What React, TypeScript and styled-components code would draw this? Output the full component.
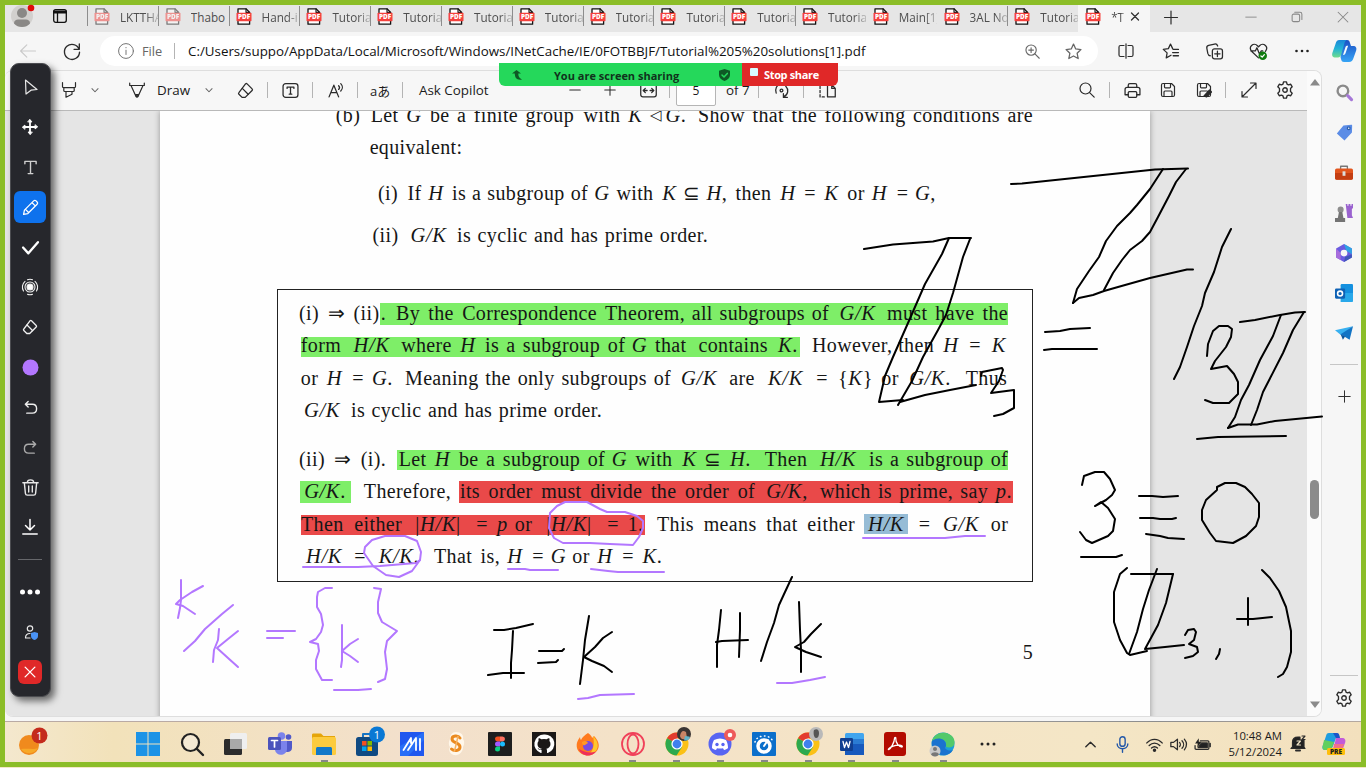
import React from "react";
import styled, { createGlobalStyle, css } from "styled-components";

const GlobalStyle = createGlobalStyle`
  * { box-sizing: border-box; }
  body { margin: 0; background: #f3e6c8; overflow: hidden; }
`;

const ui = `"Open Sans", "Noto Sans", sans-serif`;

/* ---------- shell ---------- */
const Root = styled.div`
  position: relative;
  width: 1366px;
  height: 768px;
  overflow: hidden;
  font-family: ${ui};
  color: #1b1b1b;
`;
const SharedScreen = styled.div`
  width: 1366px;
  height: 767px;
  border: 5px solid #8bbd28;
  display: flex;
  flex-direction: column;
  background: #f6f6f6;
`;
const Svg = styled.svg`
  display: block;
  flex: none;
  overflow: visible;
  fill: none;
  stroke-linecap: round;
  stroke-linejoin: round;
`;
const Slot = styled.div<{ $w: number; $ml?: number }>`
  flex: none;
  width: ${(p) => p.$w}px;
  margin-left: ${(p) => p.$ml ?? 0}px;
  display: flex;
  align-items: center;
  justify-content: center;
`;

type IconProps = { size?: number; color?: string; sw?: number; vb?: number; children: React.ReactNode };
const Icon = ({ size = 16, color = "#2b2b2b", sw = 1.2, vb = 16, children }: IconProps) => (
  <Svg width={size} height={size} viewBox={`0 0 ${vb} ${vb}`} stroke={color} strokeWidth={sw}>
    {children}
  </Svg>
);

/* ---------- tab strip ---------- */
const TabStrip = styled.div`
  flex: none;
  height: 27px;
  display: flex;
  background: #e6e6e6;
`;
const Avatar = styled.div`
  margin-left: 6px;
  width: 23px;
`;
const Tab = styled.div<{ $sep?: boolean; $active?: boolean; $dim?: boolean }>`
  flex: none;
  width: ${(p) => (p.$active ? 72 : 70.8)}px;
  height: 27px;
  display: flex;
  align-items: flex-start;
  padding: 3px 0 0 6px;
  border-left: 1px solid transparent;
  background: ${(p) => (p.$active ? "#f6f6f6" : "transparent")};
  svg { opacity: ${(p) => (p.$dim ? 0.5 : 1)}; }
  ${(p) =>
    p.$sep &&
    css`
      background: linear-gradient(#8d8d8d, #8d8d8d) 0 1px / 1px 20px no-repeat;
      background-origin: border-box;
    `}
`;
const TabTitle = styled.span<{ $w: number; $solid?: boolean }>`
  width: ${(p) => p.$w}px;
  margin-left: 10px;
  overflow: hidden;
  white-space: nowrap;
  font-size: 11.7px;
  line-height: 18px;
  color: #4e4e4e;
  mask-image: ${(p) => (p.$solid ? "none" : "linear-gradient(90deg, #000 68%, rgba(0, 0, 0, 0.25))")};
`;
const Push = styled.div`
  flex: 1;
`;

const PdfIcon = () => (
  <Svg width={16} height={17} viewBox="0 0 16 17">
    <path d="M2 .8h8l3.6 3.6v11.8H2z" fill="#fff" stroke="#111" strokeWidth={1.3} />
    <path d="M10 .8v3.6h3.6" stroke="#111" strokeWidth={1.1} />
    <rect x=".5" y="4.8" width="15" height="8.4" rx=".8" fill="#f5413d" />
    <text x="8" y="11.3" textAnchor="middle" fontSize="6.4" fontWeight="800" fill="#fff" fontFamily="Open Sans">
      PDF
    </text>
  </Svg>
);

const tabs = [
  { t: "LKTTHA", dim: true, sep: true },
  { t: "Thabo", dim: true, sep: true, solid: true },
  { t: "Hand-i", sep: true },
  ...Array.from({ length: 8 }, () => ({ t: "Tutoria", sep: true })),
  { t: "Main[1]", sep: false },
  { t: "3AL No", sep: false },
  { t: "Tutoria", sep: true },
] as { t: string; dim?: boolean; sep: boolean; solid?: boolean }[];

/* ---------- address bar ---------- */
const AddressRow = styled.div`
  flex: none;
  height: 38px;
  display: flex;
  align-items: center;
  background: #f6f6f6;
`;
const AddressPill = styled.div`
  width: 998px;
  height: 30px;
  margin-left: 19px;
  border-radius: 15px;
  background: #fff;
  display: flex;
  align-items: center;
`;
const FileLabel = styled.span`
  margin-left: 8px;
  width: 32px;
  font-size: 12.8px;
  color: #666;
`;
const Url = styled.span`
  margin-left: 13px;
  width: 690px;
  white-space: nowrap;
  font-size: 13.35px;
  color: #111;
`;
const Rule = styled.div<{ $ml?: number }>`
  flex: none;
  width: 1px;
  height: 16px;
  margin-left: ${(p) => p.$ml ?? 0}px;
  background: #b4b4b4;
`;

/* ---------- body ---------- */
const Body = styled.div`
  flex: none;
  height: 647px;
  display: flex;
  background: #f6f6f6;
`;
const Viewer = styled.div`
  width: 1317px;
  height: 647px;
  border: 1px solid #dedede;
  border-left: 0;
  border-radius: 8px;
  overflow: hidden;
  display: flex;
`;
const ViewerMain = styled.div`
  flex: none;
  width: 1302px;
  display: flex;
  flex-direction: column;
`;
const PdfBar = styled.div`
  flex: none;
  height: 40px;
  display: flex;
  align-items: center;
  padding-bottom: 1px;
  background: #f7f7f7;
  border-bottom: 1px solid #b9b9b9;
  font-size: 13.4px;
`;
const BarText = styled.span<{ $w: number; $ml: number }>`
  flex: none;
  width: ${(p) => p.$w}px;
  margin-left: ${(p) => p.$ml}px;
  white-space: nowrap;
`;
const Kana = styled(BarText)`
  font-family: "Open Sans", "Noto Sans CJK JP", sans-serif;
  font-size: 13px;
`;
const PageInput = styled.div`
  flex: none;
  width: 40px;
  height: 32px;
  margin-left: 6px;
  display: flex;
  align-items: center;
  justify-content: center;
  background: #fff;
  border: 1px solid #b5b5b5;
  border-radius: 2px;
  font-size: 12px;
`;
const Canvas = styled.div`
  flex: 1;
  overflow: hidden;
  background: #e5e5e5;
  padding: 0 0 0 155px;
`;
const Page = styled.div`
  width: 990px;
  height: 620px;
  background: #fefefe;
  display: flex;
  flex-direction: column;
  align-items: flex-start;
  box-shadow: 0 0 6px rgba(0, 0, 0, 0.35);
`;
const Scroll = styled.div`
  flex: 1;
  background: #fbfbfb;
  display: flex;
  flex-direction: column;
  align-items: center;
  padding: 8px 0 8px 1px;
`;
const Thumb = styled.div`
  width: 9px;
  height: 39px;
  margin-top: 394px;
  border-radius: 5px;
  background: #8b8b8b;
`;
const SideBar = styled.div`
  flex: 1;
  display: flex;
  flex-direction: column;
  align-items: center;
  padding: 11px 0 0 5px;
`;
const SideSlot = styled.div<{ $h?: number }>`
  flex: none;
  height: ${(p) => p.$h ?? 40}px;
  display: flex;
  align-items: center;
`;
const SideRule = styled.div<{ $mt?: number }>`
  flex: none;
  width: 28px;
  height: 1px;
  margin-top: ${(p) => p.$mt ?? 0}px;
  background: #c6c6c6;
`;

/* ---------- document text ---------- */
const Line = styled.div<{ $mt: number }>`
  flex: none;
  height: 22px;
  margin-top: ${(p) => p.$mt}px;
  display: flex;
  font: 20px/24px "Liberation Serif", serif;
  letter-spacing: 0.35px;
  white-space: nowrap;
  color: #161616;
`;
const Seg = styled.span<{ $w: number; $gap: number; $math?: boolean; $wide?: boolean; $small?: boolean }>`
  flex: none;
  width: ${(p) => p.$w}px;
  margin-left: ${(p) => p.$gap}px;
  text-align-last: ${(p) => (p.$wide ? "justify" : "center")};
  display: ${(p) => (p.$wide ? "block" : "flex")};
  justify-content: center;
  font-style: ${(p) => (p.$math ? "italic" : "normal")};
  ${(p) => p.$math && "font-size: 20.5px; letter-spacing: 0.6px;"}
  ${(p) => p.$small && "font-size: 15px;"}
`;
const Mark = styled.span<{ $w: number; $gap: number; $c: string; $y: number; $h: number }>`
  flex: none;
  display: flex;
  width: ${(p) => p.$w}px;
  height: 26px;
  margin-left: ${(p) => p.$gap}px;
  background: ${(p) => `linear-gradient(${p.$c}, ${p.$c}) 0 ${p.$y}px / 100% ${p.$h}px no-repeat`};
`;
const Up = styled.span`
  font-style: normal;
`;
const ProofBox = styled.div`
  flex: none;
  width: 756px;
  height: 293px;
  margin: 44px 0 0 117px;
  border: 1px solid #222;
  display: flex;
  flex-direction: column;
`;

type Run = [string, number, number];
type Marked = { c: string; from: number; to: number; y?: number; h?: number; runs: Run[] };
type Part = Run | Marked;

const upright = /([/|{}.,])/;
const renderRuns = (runs: Part[], start: number): React.ReactNode[] => {
  let cursor = start;
  return runs.map((part, i) => {
    if (Array.isArray(part)) {
      const [text, from, to] = part;
      const gap = from - cursor;
      cursor = to;
      const math = /^[|{]?[GHKp]([/|},.].*)?$/.test(text);
      return (
        <Seg key={i} $w={to - from} $gap={gap} $math={math} $wide={text.includes(" ")} $small={text === "◁"}>
          {math ? text.split(upright).map((s, j) => (/[|{}.,]/.test(s) ? <Up key={j}>{s}</Up> : <i key={j}>{s}</i>)) : text}
        </Seg>
      );
    }
    const gap = part.from - cursor;
    cursor = part.to;
    return (
      <Mark key={i} $w={part.to - part.from} $gap={gap} $c={part.c} $y={part.y ?? 2} $h={part.h ?? 22}>
        {renderRuns(part.runs, part.from)}
      </Mark>
    );
  });
};
const TextLine = ({ mt, start, parts }: { mt: number; start: number; parts: Part[] }) => (
  <Line $mt={mt}>{renderRuns(parts, start)}</Line>
);

const GREEN = "#7eee68";
const RED = "#e94949";
const BLUE = "#96bcd6";

const intro: { mt: number; parts: Part[] }[] = [
  { mt: -8, parts: [["(b)", 336, 360], ["Let", 370, 399], ["G", 406, 422], ["be a finite group", 430, 574], ["with", 582, 622], ["K", 627, 644], ["◁", 650, 662], ["G.", 665, 687], ["Show that the following conditions are", 698, 1033]] },
  { mt: 10, parts: [["equivalent:", 370, 462]] },
  { mt: 24, parts: [["(i)", 378, 398], ["If", 407, 422], ["H", 428, 444], ["is a subgroup of", 452, 588], ["G", 594, 610], ["with", 616, 654], ["K", 661, 678], ["⊆", 684, 699], ["H,", 706, 728], ["then", 734, 773], ["H", 780, 796], ["=", 803, 817], ["K", 823, 840], ["or", 847, 865], ["H", 872, 887], ["=", 896, 909], ["G,", 915, 936]] },
  { mt: 20, parts: [["(ii)", 373, 398], ["G/K", 407, 450], ["is cyclic and has prime order.", 457, 708]] },
];
const proof: { mt: number; parts: Part[] }[] = [
  { mt: 11, parts: [["(i)", 299, 319], ["⇒", 327, 346], ["(ii)", 354, 379], { c: GREEN, from: 380, to: 1008, runs: [[".", 381, 386], ["By the Correspondence", 396, 597], ["Theorem, all subgroups of", 605, 829], ["G/K", 836, 879], ["must have the", 887, 1008]] }] },
  { mt: 10, parts: [{ c: GREEN, from: 301, to: 800, y: 4, h: 20, runs: [["form", 301, 341], ["H/K", 350, 393], ["where", 402, 451], ["H", 460, 476], ["is a subgroup", 485, 600], ["of", 608, 625], ["G", 632, 647], ["that contains", 655, 768], ["K.", 776, 800]] }, ["However, then", 812, 934], ["H", 943, 959], ["=", 968, 982], ["K", 991, 1007]] },
  { mt: 11, parts: [["or", 301, 318], ["H", 326, 343], ["=", 351, 365], ["G.", 372, 393], ["Meaning the only subgroups of", 405, 671], ["G/K", 678, 720], ["are", 728, 756], ["K/K", 763, 808], ["=", 815, 829], ["{K}", 837, 874], ["or", 881, 899], ["G/K.", 906, 954], ["Thus", 965, 1008]] },
  { mt: 10, parts: [["G/K", 301, 343], ["is cyclic and has prime order.", 351, 602]] },
  { mt: 27, parts: [["(ii)", 299, 325], ["⇒", 333, 352], ["(i).", 361, 386], { c: GREEN, from: 397, to: 1008, y: 3, h: 20, runs: [["Let", 398, 427], ["H", 434, 451], ["be a subgroup of", 459, 605], ["G", 612, 627], ["with", 635, 673], ["K", 681, 698], ["⊆", 706, 720], ["H.", 729, 752], ["Then", 764, 808], ["H/K", 816, 860], ["is a subgroup of", 869, 1008]] }] },
  { mt: 10, parts: [{ c: GREEN, from: 300, to: 351, runs: [["G/K.", 300, 350]] }, ["Therefore,", 364, 451], { c: RED, from: 459, to: 1013, runs: [["its order must divide the order of", 460, 755], ["G/K,", 763, 811], ["which is prime, say", 820, 988], ["p.", 995, 1013]] }] },
  { mt: 11, parts: [{ c: RED, from: 301, to: 645, y: 3, h: 20, runs: [["Then either", 301, 402], ["|H/K|", 410, 466], ["=", 475, 489], ["p", 497, 508], ["or", 515, 532], ["|H/K|", 541, 597], ["=", 606, 620], ["1.", 627, 644]] }, ["This means that either", 657, 855], { c: BLUE, from: 864, to: 908, y: 2, h: 20, runs: [["H/K", 864, 908]] }, ["=", 917, 932], ["G/K", 940, 982], ["or", 991, 1008]] },
  { mt: 10, parts: [["H/K", 302, 346], ["=", 353, 367], ["K/K.", 374, 424], ["That is,", 434, 500], ["H", 507, 523], ["=", 531, 545], ["G", 551, 566], ["or", 572, 590], ["H", 597, 613], ["=", 621, 635], ["K.", 641, 664]] },
];

/* ---------- freehand annotations ---------- */
const Ink = styled.svg`
  position: absolute;
  inset: 0;
  fill: none;
  stroke-linecap: round;
  stroke-linejoin: round;
  stroke-width: 2;
`;
const blackInk = [
  "864,249 893,244.5 933,241.5 949,238 971,238",
  "949,238 942,254 925,284 908,323 893,357 885,376 879,402 903,400",
  "970,239 963,257 953,293 946,315 938,330 923,357 912,381 898,405",
  "900,402 925,395 950,390 976,385",
  "981,376 982,372 1002,368 1003,370 999,381 991,393 1014,390 1014,408 1003,414 994,416",
  "1011,184 1022,183.5 1155,169.5 1188,168.5",
  "1163,169 1150,189 1137,205 1130,213 1117,226 1106,241 1099,257 1089,271 1077,289 1073,303",
  "1073,303 1079,298 1093,295 1104,291 1118,287 1150,278 1187,269.5 1193,269.5",
  "1186,169 1176,182 1169,196 1158,217 1150,232 1142,241 1130,250 1122,260 1113,273 1104,290",
  "1231,229 1222,247 1214,272 1205,293 1202,306 1194,326 1187,347 1180,367 1174,379",
  "1045,332 1060,331 1070,329 1090,328",
  "1044,350 1052,349 1097,349",
  "1207,356 1208,344 1213,331 1219,326 1228,326 1232,329 1231,337 1226,347 1215,361 1211,369 1227,366 1234,374 1238,382 1238,394 1229,403 1213,403 1205,400",
  "1240,322 1255,320 1280,315 1295,312.5 1305,312",
  "1281,315 1273,336 1260,360 1249,385 1241,400 1235,417 1228,428",
  "1304,312 1293,330 1283,353 1263,392 1257,410 1251,425",
  "1228,428 1238,424.5 1257,424.5 1275,421 1322,416.5",
  "1197,439 1218,437 1286,436",
  "1082,485 1084,476 1095,472 1104,472 1110,479 1115,490 1112,495 1106,500 1095,506 1101,502 1108,508 1115,519 1113,531 1108,536 1092,543 1086,540 1080,532",
  "1081,557 1116,557 1122,555",
  "1139,496 1152,496 1163,497 1178,496",
  "1140,518 1153,518 1160,519 1172,519 1176,518",
  "1146,534 1160,536 1168,538 1184,539",
  "1217,490 1217,487 1225,483 1236,483 1245,487 1252,494 1259,503 1259,517 1256,526 1246,536 1233,543 1216,541 1210,533 1202,520 1202,510 1206,500 1217,490",
  "1127,568 1120,574 1114,592 1114,622 1120,640 1127,653 1130,655 1147,651",
  "1131,574 1173,574",
  "1157,569 1149,590 1143,609 1137,632 1129,654",
  "1173,574 1166,603 1158,625 1145,649 1165,647 1184,645",
  "1185,635 1188,630 1194,629 1196,632 1194,640 1189,644 1197,647 1198,652 1193,656 1185,658",
  "1220,649 1219,654 1216,659",
  "1248,598 1248,625",
  "1237,619 1253,619 1272,617",
  "1262,570 1270,578 1279,591 1286,607 1291,631 1291,652 1287,667 1283,674 1278,677",
  "494,630 504,630 516,628 533,624",
  "513,631 512,650 511,663 511,678",
  "488,675 503,673 524,673",
  "539,651 562,651 564,649",
  "538,663 556,662 558,660",
  "589,616 585,640 583,660 580,684",
  "612,632 603,638 595,647 584,657 592,661 604,666 612,672",
  "721,610 719,630 717,645 717,667",
  "740,613 740,630 739,657",
  "716,642 722,641 748,640",
  "792,577 785,592 779,605 774,623 767,642 761,661",
  "799,602 800,630 801,650 801,672",
  "821,624 811,634 804,642 795,647 806,652 821,657",
];
const violetInk = [
  "181,580 181,600 180,608 178,618",
  "203,586 192,592 180,600 176,604 183,606 195,614",
  "233,605 222,614 205,629 195,641 184,651",
  "219,629 218,640 214,650 213,662",
  "238,631 228,639 217,648 228,658 238,667",
  "267,631 295,631",
  "267,638 283,638",
  "332,588 325,588 318,592 317,597 317,607 321,614 323,625 321,632 316,639 310,642 318,644 319,651 316,660 316,669 322,680 332,680",
  "342,625 342,645 342,660 341,667",
  "358,639 350,644 342,651 350,656 358,662",
  "374,588 381,589 378,602 378,613 382,622 397,631 387,641 385,652 387,669 385,679 378,682",
  "334,690 358,690 371,689",
  "578,699 588,698 600,695 634,694",
  "777,683 792,683 810,680 825,677",
  "303,567 358,567 380,566 416,563 420,560",
  "365,547 372,540 385,536 405,536 417,541 421,552 420,560 412,571 399,577 386,575 373,566 364,553 365,547",
  "508,569 525,569 530,570 558,570",
  "591,569 608,571 618,572 664,572",
  "550,513 557,506 565,502 587,502 600,509 607,512 625,512 637,516 643,521 643,528 639,537 633,545 610,544 590,543 563,543 554,538 549,528 550,513",
  "863,538 945,538 965,536 985,536",
];

/* ---------- screen share overlays ---------- */
const ShareBanner = styled.div`
  position: absolute;
  left: 499px;
  top: 63px;
  display: flex;
  height: 23px;
  font-size: 11px;
  font-weight: 700;
  line-height: 23px;
  border-radius: 0 0 6px 6px;
  overflow: hidden;
`;
const Sharing = styled.div`
  width: 243px;
  display: flex;
  align-items: center;
  background: #25d85b;
  color: #10331c;
  padding-left: 13px;
`;
const SharingText = styled.span`
  width: 126px;
  margin: 1px 39px 0 32px;
  white-space: nowrap;
`;
const StopShare = styled.div`
  width: 96px;
  display: flex;
  align-items: center;
  background: #e02828;
  color: #fff;
  padding: 0 0 1px 8px;
  white-space: nowrap;
  letter-spacing: -0.35px;
`;
const StopSquare = styled.span`
  width: 8px;
  height: 8px;
  margin: 0 6px 4px 0;
  border-radius: 1px;
  background: #d8fbff;
`;
const Tools = styled.div`
  position: absolute;
  left: 10px;
  top: 63px;
  width: 41px;
  height: 634px;
  border-radius: 9px;
  border: 1px solid #4b4c50;
  background: #26272c;
  box-shadow: 4px 4px 7px rgba(0, 0, 0, 0.55);
  display: flex;
  flex-direction: column;
  align-items: center;
  padding: 3px 1px 0 0;
`;
const ToolSlot = styled.div<{ $bg?: string; $s?: number }>`
  flex: none;
  width: ${(p) => p.$s ?? 32}px;
  height: ${(p) => p.$s ?? 32}px;
  margin: ${(p) => (40 - (p.$s ?? 32)) / 2}px 0;
  display: flex;
  align-items: center;
  justify-content: center;
  border-radius: 6px;
  background: ${(p) => p.$bg ?? "transparent"};
`;
const ToolRule = styled.div`
  flex: none;
  width: 24px;
  height: 1px;
  margin: 12px 0;
  background: #66676b;
`;

/* ---------- taskbar ---------- */
const TaskEdge = styled.div`
  flex: none;
  height: 5px;
  border-bottom: 1px solid;
  border-image: linear-gradient(90deg, #b9aaa4 50%, #a7a7a7 55%, #8d8d8d 85%, #b5a9a0) 1;
`;
const Taskbar = styled.div`
  flex: 1;
  display: flex;
  align-items: center;
  background: linear-gradient(90deg, #f4e8ce, #f2e2ba 8%, #f3e0cc 30%, #f4e2c8 45%, #f4e6c6 80%, #f3e0bd);
`;
const TaskItem = styled.div<{ $run?: boolean; $w?: number }>`
  flex: none;
  width: ${(p) => p.$w ?? 44.05}px;
  height: 40px;
  display: flex;
  align-items: center;
  justify-content: center;
  padding-top: 4px;
  background: ${(p) => (p.$run ? "linear-gradient(#888,#888) 50% 100% / 7px 2px no-repeat" : "none")};
`;
const Tray = styled.div`
  display: flex;
  align-items: center;
  padding-top: 4px;
`;
const Clock = styled.div`
  width: 66px;
  text-align: right;
  font-size: 11.3px;
  line-height: 16px;
  white-space: nowrap;
`;

const T = ({ children }: { children: React.ReactNode }) => (
  <Svg width={24} height={24} viewBox="0 0 24 24">
    {children}
  </Svg>
);
const Chrome = () => (
  <>
    <circle cx="12" cy="12" r="11.5" fill="#fbc116" />
    <path d="M12 12 2 6.2A11.5 11.5 0 0 1 22 6.2H12z" fill="#e33b2e" />
    <path d="M2 6.2A11.5 11.5 0 0 0 11.5 23.5L17 15 12 12z" fill="#2da94f" />
    <circle cx="12" cy="12" r="5.6" fill="#fff" />
    <circle cx="12" cy="12" r="4.4" fill="#3f80ee" />
  </>
);
const Copilot = () => (
  <>
    <defs>
      <linearGradient id="cpLeft" x1="0" y1="0" x2="0" y2="1">
        <stop offset="0" stopColor="#1a86d8" />
        <stop offset=".5" stopColor="#22b3d6" />
        <stop offset="1" stopColor="#6fdc8c" />
      </linearGradient>
      <linearGradient id="cpRight" x1="0" y1="0" x2="0" y2="1">
        <stop offset="0" stopColor="#1b4fc4" />
        <stop offset="1" stopColor="#36a4f5" />
      </linearGradient>
    </defs>
    <path d="M11 1h4c2 0 2.500 1 3 3l1 3h2c3 0 4 2 3 5l-2.500 7c-.8 2.500-2 4-4.500 4h-5c-2 0-2.500-1-3-3l-.5-2z" fill="url(#cpRight)" />
    <path d="M7.500 1H15c-1.500.5-2 1.500-2.500 3L9 16c-.5 1.500-1.500 2.500-3 2.500H3.500c-3 0-4-2-3-5L3.500 5C4.300 2.500 5 1 7.500 1z" fill="url(#cpLeft)" />
    <path d="m11 16 2.500-8c.3-.8.800-1.200 1.600-1.200h1L13.600 14c-.4 1.300-1 2-2.600 2z" fill="#f5fbff" />
  </>
);

const gear = (
  <>
    <path d="M6.700.8h2.600l.5 2 1.300.7 2-.6 1.300 2.300-1.500 1.400v2.800l1.500 1.400-1.300 2.300-2-.6-1.300.7-.5 2H6.700l-.5-2-1.300-.7-2 .6-1.300-2.300 1.500-1.400V6.600L1.600 5.200l1.300-2.300 2 .6 1.300-.7z" />
    <circle cx="8" cy="8" r="2" />
  </>
);
const chevron = <path d="m4.500 6.500 3.500 3.500 3.500-3.500" />;
const floppy = (
  <>
    <path d="M1.500 3c0-1 .5-1.500 1.500-1.500h8.500l3 3V13c0 1-.5 1.500-1.500 1.500H3c-1 0-1.500-.5-1.500-1.500z" />
    <path d="M4.500 1.500V5c0 .5.300.8.8.8h4.400c.5 0 .8-.3.800-.8V1.500M4 14.500V10c0-.6.300-1 1-1h6c.7 0 1 .4 1 1v4.500" />
  </>
);
const eraser = (
  <>
    <path d="m9.500 1.800 4.700 4.700c.5.500.5 1 0 1.500l-6.500 6.500H4.800L1.800 11.500c-.5-.5-.5-1 0-1.500L8 1.800c.5-.5 1-.5 1.500 0z" />
    <path d="m5 6 5.500 5.500" />
  </>
);

export default function App() {
  return (
    <Root>
      <GlobalStyle />
      <SharedScreen>
        <TabStrip>
          <Avatar>
            <Svg width={30} height={27} viewBox="0 0 30 27">
              <circle cx="11" cy="11" r="11" fill="#d2d0ce" />
              <circle cx="11" cy="8" r="5" fill="#8a8886" />
              <path d="M3 18.500c0-3 2-4 4-4h8c2 0 4 1 4 4-2 2.500-5 3.500-8 3.500s-6-1-8-3.500z" fill="#8a8886" />
              <circle cx="20" cy="3" r="3.300" fill="#e00b0b" />
            </Svg>
          </Avatar>
          <Slot $w={14} $ml={19}>
            <Svg width={14} height={27} viewBox="0 0 14 27" stroke="#111" strokeWidth={1.3}>
              <rect x=".7" y="4.700" width="12.600" height="12.600" rx="2" />
              <path d="M1 6.500h12M1 7.500h12" strokeWidth={2} />
              <path d="M4.500 8v9" />
            </Svg>
          </Slot>
          <Slot $w={20} />
          {tabs.map((t, i) => (
            <Tab key={i} $sep={t.sep} $dim={t.dim}>
              <PdfIcon />
              <TabTitle $w={38} $solid={t.solid}>{t.t}</TabTitle>
            </Tab>
          ))}
          <Tab $active>
            <PdfIcon />
            <TabTitle $w={14}>*T</TabTitle>
            <Slot $w={10} $ml={5}>
              <Svg width={10} height={17} viewBox="0 0 10 17" stroke="#333" strokeWidth={1.300}>
                <path d="m1.500 5 7 7m0-7-7 7" />
              </Svg>
            </Slot>
          </Tab>
          <Slot $w={16} $ml={13}>
            <Icon sw={1.200}><path d="M8 0v13M1.500 6.500h13" /></Icon>
          </Slot>
          <Push />
          <Slot $w={16}><Icon size={12} color="#888" sw={1.200}><path d="M1 5.500h14" /></Icon></Slot>
          <Slot $w={16} $ml={30}>
            <Icon size={12} color="#888" sw={1.400}><rect x="1.500" y="1.500" width="10" height="10" rx="2" /><path d="M5-1h7c1.500 0 2.500 1 2.500 2.500v7" /></Icon>
          </Slot>
          <Slot $w={16} $ml={30}><Icon size={12} color="#888" sw={1.400}><path d="m1.500-1 13 13m0-13-13 13" /></Icon></Slot>
          <Slot $w={10} />
        </TabStrip>

        <AddressRow>
          <Slot $w={18} $ml={14}><Icon color="#c9c9c9" sw={1.100}><path d="M15.500 8H.8m6-6.200L.6 8l6.200 6.200" /></Icon></Slot>
          <Slot $w={18} $ml={26}><Icon size={18} sw={1.200}><path d="M14.300 6.500A6.700 6.700 0 1 0 14.700 9M14.500 1.800v4.700H9.800" /></Icon></Slot>
          <AddressPill>
            <Slot $w={16} $ml={18}><Icon color="#757575" sw={1}><circle cx="8" cy="8" r="7.400" /><path d="M8 7.200v4.300M8 4.500v.3" /></Icon></Slot>
            <FileLabel>File</FileLabel>
            <Rule />
            <Url>C:/Users/suppo/AppData/Local/Microsoft/Windows/INetCache/IE/0FOTBBJF/Tutorial%205%20solutions[1].pdf</Url>
            <Push />
            <Slot $w={16}><Icon size={15} color="#666"><circle cx="6.500" cy="6.500" r="5.500" /><path d="m10.600 10.600 4.600 4.600M4 6.500h5M6.500 4v5" /></Icon></Slot>
            <Slot $w={18} $ml={24}><Icon size={17} color="#666"><path d="m8 1 2.100 4.600 4.900.6-3.600 3.400 1 5L8 12.200l-4.400 2.400 1-5L1 6.200l4.900-.6z" /></Icon></Slot>
            <Slot $w={16} />
          </AddressPill>
          <Slot $w={18} $ml={19}><Icon><path d="M6 2.500H2.500c-1 0-1.500.5-1.500 1.500v8c0 1 .5 1.500 1.500 1.500H6M10 2.500h3.500c1 0 1.500.5 1.500 1.500v8c0 1-.5 1.500-1.500 1.500H10M8 .8v14.400" /></Icon></Slot>
          <Slot $w={18} $ml={26}><Icon size={17}><path d="M8.500 11.500 4 14l.8-4.700L1.200 6l4.800-.7L8 1l2 4.300M10.500 6h5M10 9h5.500M10.500 12h5" /></Icon></Slot>
          <Slot $w={18} $ml={26}><Icon size={17}><rect x="6" y="5.500" width="9.500" height="9.500" rx="2" /><path d="M10.750 7.700v5M8.200 10.200h5M4 12C2.500 12 2 11 1.700 9.800L.8 5C.5 3.500 1 2.500 2.500 2.200L8 1c1.400-.3 2.500.3 3 1.800" /></Icon></Slot>
          <Slot $w={18} $ml={26}>
            <Icon size={17}><path d="M8 14 1.700 8C0 6 0 3.800 1.500 2.400 3 1 5.500 1 7 2.600L8 3.700l1-1.100C10.500 1 13 1 14.500 2.400 16 3.800 16 6 14.500 7.800M.8 7.500H5l1.500-3 2.500 6 1.500-3H12" /><circle cx="12" cy="12" r="4" fill="#107c10" stroke="none" /><path d="m10.300 12.200 1.200 1.100 2-2.300" stroke="#fff" /></Icon>
          </Slot>
          <Slot $w={18} $ml={26}><Icon><g fill="#222" stroke="none"><circle cx="2.500" cy="8" r="1.300" /><circle cx="8" cy="8" r="1.300" /><circle cx="13.500" cy="8" r="1.300" /></g></Icon></Slot>
          <Slot $w={24} $ml={21}><T><Copilot /></T></Slot>
        </AddressRow>

        <Body>
          <Viewer>
            <ViewerMain>
              <PdfBar>
                <Slot $w={16} $ml={56}><Icon><path d="M1.500.5v4c0 .8.400 1.200 1.200 1.200h10.600c.8 0 1.200-.4 1.200-1.200v-4M2.800 6v2.500c0 .6.300 1 1 1h8.400c.7 0 1-.4 1-1V6M5 9.500v5.700l6-3V9.500" /></Icon></Slot>
                <Slot $w={12} $ml={12}><Icon size={14} color="#666">{chevron}</Icon></Slot>
                <Slot $w={16} $ml={28}><Icon><path d="M.7 1v2.500M15.300 1v2.500M.7 3.500h14.600M2 3.500l5 11c.4.800 1.600.8 2 0l5-11" /><path d="m6.500 12.500 1 2h1l1-2z" fill="#444" /></Icon></Slot>
                <BarText $w={34} $ml={12}>Draw</BarText>
                <Slot $w={12} $ml={12}><Icon size={14} color="#666">{chevron}</Icon></Slot>
                <Slot $w={18} $ml={21}><Icon size={17}>{eraser}</Icon></Slot>
                <Rule $ml={13} />
                <Slot $w={16} $ml={14}><Icon size={17}><rect x="1" y="1.500" width="14" height="13" rx="2.500" /><path d="M4.800 6V4.800h6.400V6M8 4.800v6.700M6.800 11.500h2.400" /></Icon></Slot>
                <Rule $ml={14} />
                <Slot $w={16} $ml={15}><Icon size={17}><path d="m1 14 4.500-11L10 14M2.700 10h5.600M10 3.500c1 1 1 2.500 0 3.500M12 1.500c2 2 2 5 0 7" /></Icon></Slot>
                <Rule $ml={13} />
                <Kana $w={20} $ml={12}>aあ</Kana>
                <Rule $ml={12} />
                <BarText $w={74} $ml={16}>Ask Copilot</BarText>
                <Slot $w={14} $ml={75}><Icon size={14}><path d="M2 8h12" /></Icon></Slot>
                <Slot $w={14} $ml={21}><Icon size={14}><path d="M2 8h12M8 2v12" /></Icon></Slot>
                <Slot $w={18} $ml={22}><Icon size={17}><rect x=".7" y="2" width="14.600" height="12" rx="2" /><path d="M3.500 8h3.200M9.500 8h3M5 6 3 8l2 2M11 6l2 2-2 2" /></Icon></Slot>
                <Rule $ml={12} />
                <PageInput>5</PageInput>
                <BarText $w={22} $ml={10}>of 7</BarText>
                <Rule $ml={10} />
                <Slot $w={18} $ml={13}><Icon size={17}><circle cx="8" cy="8" r="1.300" /><path d="M3 10.500C1.500 6 4 3 6 2.500M12 4c3 3 2.500 8-2 10M13.500 14.500H9.800V11" /></Icon></Slot>
                <Rule $ml={13} />
                <Slot $w={18} $ml={14}><Icon size={17}><path d="M8 2.500h4l3.300 3.500v8H8zM12 3v3h3" /><path d="M5 14H1V2.500h4" strokeDasharray="2 2" /></Icon></Slot>
                <Push />
                <Slot $w={16}><Icon><circle cx="6.500" cy="6.500" r="5.500" /><path d="m10.600 10.600 4.600 4.600" /></Icon></Slot>
                <Rule $ml={14} />
                <Slot $w={18} $ml={13}><Icon size={17}><path d="M4 5V3c0-1 .5-1.500 1.500-1.500h5c1 0 1.500.5 1.500 1.500v2M4 12H1V7c0-1.300.7-2 2-2h10c1.300 0 2 .7 2 2v5h-3" /><rect x="4" y="9" width="8" height="5.500" rx="1" /></Icon></Slot>
                <Slot $w={18} $ml={18}><Icon>{floppy}</Icon></Slot>
                <Slot $w={18} $ml={18}><Icon>{floppy}<path d="m8 14 5.500-6 2 2-5 5z" fill="#2b2b2b" /></Icon></Slot>
                <Rule $ml={12} />
                <Slot $w={18} $ml={14}><Icon><path d="M1.500 14.500l13-13M9.500 1h5.500v5.500M1 9.500V15h5.500" /></Icon></Slot>
                <Slot $w={18} $ml={18}><Icon size={18}>{gear}</Icon></Slot>
                <Slot $w={13} />
              </PdfBar>
              <Canvas>
                <Page>
                  {intro.map((l, i) => <TextLine key={i} mt={l.mt} start={160} parts={l.parts} />)}
                  <ProofBox>
                    {proof.map((l, i) => <TextLine key={i} mt={l.mt} start={278} parts={l.parts} />)}
                  </ProofBox>
                  <TextLine mt={58} start={160} parts={[["5", 1022, 1034]]} />
                </Page>
              </Canvas>
            </ViewerMain>
            <Scroll>
              <Svg width={10} height={7} viewBox="0 0 10 7"><path d="M5 0 10 6.500H0z" fill="#8b8b8b" /></Svg>
              <Thumb />
              <Push />
              <Svg width={10} height={7} viewBox="0 0 10 7"><path d="M5 7 10 .5H0z" fill="#8b8b8b" /></Svg>
            </Scroll>
          </Viewer>
          <SideBar>
            <SideSlot $h={22}><Icon size={17}><circle cx="6.500" cy="6.500" r="5" stroke="#8a8a8a" strokeWidth={2.200} /><path d="m11 11 3.600 3.600" stroke="#a678d8" strokeWidth={3} /></Icon></SideSlot>
            <SideSlot $h={58}><Icon size={17}><path d="M7 1.500 14.500.8c.5 0 .8.300.7.800L15 8l-7 7.500L.8 9z" fill="#5b8ce6" stroke="none" /><circle cx="12" cy="4" r="1.300" fill="#fff" stroke="#2b5fb0" /></Icon></SideSlot>
            <SideSlot $h={24}><Icon size={18}><path d="M5 4V2h6v2" stroke="#777" /><rect x="0" y="4" width="16" height="10" rx="1.500" fill="#e2551d" stroke="none" /><path d="M0 8h16v4.500c0 1-.5 1.500-1.500 1.500h-13C.5 14 0 13.500 0 12.500z" fill="#c43e12" stroke="none" /><rect x="6.700" y="6.500" width="2.600" height="4" fill="#ddd" stroke="none" /></Icon></SideSlot>
            <SideSlot $h={56}><Icon size={18}><g stroke="none"><path d="M9.500 0h1.500v1.500h1V0h1.700v1.500h1V0H16v3.500l-1 1V10l1 2.500h-5z" fill="#9a62cf" /><circle cx="5" cy="5" r="2.700" fill="#8d8d8d" /><path d="M3.500 7h3l1 5.500H9V16H0v-3.500h2.500z" fill="#747474" /></g></Icon></SideSlot>
            <SideSlot $h={24}><Icon size={18}><g stroke="none"><path d="M8 0 15 4v8l-7 4-7-4V4z" fill="#6a5be0" /><path d="m8 0 7 4v5l-5-3z" fill="#2ea3e3" /><path d="M1 4v8l4 2.300V8z" fill="#a86ddc" /><path d="m8 16 7-4V9l-6 2.500z" fill="#3e56b8" /><circle cx="8" cy="8" r="3" fill="#f6f6f6" /></g></Icon></SideSlot>
            <SideSlot $h={56}><Icon size={18}><g stroke="none"><rect x="5" y="0" width="11" height="10" rx="1" fill="#1490df" /><path d="M5 8h11v7c0 .6-.4 1-1 1H5z" fill="#28a8ea" /><rect x="0" y="4" width="9" height="9" rx="1" fill="#0f62b5" /></g><circle cx="4.500" cy="8.500" r="2.200" stroke="#fff" strokeWidth={1.400} /></Icon></SideSlot>
            <SideSlot $h={24}><Icon size={18}><g stroke="none"><path d="M0 5.500 16 2 5.500 10z" fill="#38b0f0" /><path d="m5 9 11-7-3 12z" fill="#1173c4" /><path d="m5 9 2 5 2-3z" fill="#0c559a" /></g></Icon></SideSlot>
            <SideRule $mt={19} />
            <SideSlot $h={63}><Icon size={13}><path d="M8 1v14M1 8h14" /></Icon></SideSlot>
            <SideRule $mt={247} />
            <SideSlot $h={44}><Icon size={18}>{gear}</Icon></SideSlot>
          </SideBar>
        </Body>

        <TaskEdge />
        <Taskbar>
          <TaskItem $w={54}>
            <Svg width={30} height={30} viewBox="0 0 30 30"><circle cx="12" cy="16" r="10" fill="#f08a1d" /><path d="M4 20a10 10 0 0 0 17-1c-5 2-9 0-17 1z" fill="#f7a928" /><circle cx="22.500" cy="6.500" r="8" fill="#c42b1c" /><text x="22.500" y="10.500" textAnchor="middle" fontSize="11" fill="#fff" fontFamily="Open Sans">1</text></Svg>
          </TaskItem>
          <Slot $w={67} />
          <TaskItem><T><path d="M0 0h11.500v11.500H0zM12.500 0H24v11.500H12.500zM0 12.500h11.500V24H0zM12.500 12.500H24V24H12.500z" fill="#1c93e6" /></T></TaskItem>
          <TaskItem><T><circle cx="10.500" cy="10.500" r="8.500" stroke="#222" strokeWidth={2.200} fill="#f5ead4" /><path d="m17 17 6 6" stroke="#222" strokeWidth={2.400} /></T></TaskItem>
          <TaskItem><T><rect x="6" y="1" width="17" height="16" rx="1.500" fill="#efefef" /><rect x="0" y="7" width="18" height="16" rx="1.500" fill="#2c2c2c" /><path d="M6 7h12v10H6z" fill="#a9a9a9" /></T></TaskItem>
          <TaskItem><T><circle cx="20.500" cy="5" r="2.800" fill="#5059c9" /><circle cx="13.500" cy="4" r="3.800" fill="#7b83eb" /><path d="M16 9h8v7c0 4-5 5-8 3z" fill="#5059c9" /><path d="M7 9h12v8c0 7-11 8-12 1z" fill="#7b83eb" /><rect x="0" y="5" width="13" height="13" rx="1.500" fill="#4b53bc" /><path d="M3.500 8.500h6M6.500 8.500V15" stroke="#fff" strokeWidth={1.700} /></T></TaskItem>
          <TaskItem $run><T><path d="M0 3c0-1 .5-1.500 1.500-1.500H9L11.500 4H23v6H0z" fill="#e5a50a" /><rect x="0" y="5" width="24" height="18" rx="1.500" fill="#fccb3e" /><path d="M4 17c0-1.500.5-2 2-2h12c1.500 0 2 .5 2 2v6H4z" fill="#1278c8" /></T></TaskItem>
          <TaskItem><T><path d="M7 5V2h8v3" stroke="#1674c4" strokeWidth={2} /><rect x="0" y="5" width="22" height="19" rx="2.500" fill="#104a82" /><path d="M6 9h4.500v4.500H6z" fill="#f25022" /><path d="M11.500 9H16v4.500h-4.500z" fill="#7fba00" /><path d="M6 14.500h4.500V19H6z" fill="#00a4ef" /><path d="M11.500 14.500H16V19h-4.500z" fill="#ffb900" /><circle cx="21" cy="2.500" r="8" fill="#0a78d4" /><text x="21" y="6.500" textAnchor="middle" fontSize="11" fill="#fff" fontFamily="Open Sans">1</text></T></TaskItem>
          <TaskItem><T><rect width="24" height="24" fill="#2057ef" /><path d="M0 14 24 0v8L8 24H0z" fill="#2f86ff" opacity=".5" /><path d="M3.500 18 11 6v5M8 18l8-12v12M20 7v11" stroke="#fff" strokeWidth={1.800} /></T></TaskItem>
          <TaskItem><T><path d="M12 0c5 0 8 3 7 7 2 3 1 6 0 8 0 5-4 9-9 8-4-1-6-5-4-8-2-3-1-6 0-8 0-4 2-7 6-7z" fill="#fff7ea" /><path d="M16 6c-2-3-8-2.500-8 1C8 11.500 16 10 16 15c0 4-6 4.500-8.500 2" stroke="#eb8a1f" strokeWidth={3} /><path d="M14 4.500 10.500 19" stroke="#f6b262" strokeWidth={1.500} /></T></TaskItem>
          <TaskItem><T><rect width="24" height="24" rx="1" fill="#1e1e1e" /><path d="M12 4.500H9.500a2.500 2.500 0 0 0 0 5H12z" fill="#f24e1e" /><path d="M12 4.500h2.500a2.500 2.500 0 0 1 0 5H12z" fill="#ff7262" /><path d="M12 9.500H9.500a2.500 2.500 0 0 0 0 5H12z" fill="#a259ff" /><circle cx="14.500" cy="12" r="2.500" fill="#1abcfe" /><path d="M12 14.500H9.500A2.500 2.500 0 1 0 12 17z" fill="#0acf83" /></T></TaskItem>
          <TaskItem><T><rect width="24" height="24" fill="#1b1817" /><path d="M12 2.500a9.500 9.500 0 0 0-3.200 18.500c.6.100.8-.2.800-.6V18c-3 .5-3.500-1.400-4-2 1 0 1.500 1.500 3 1.400.5 0 1-.2 1.200-.6C6.500 16.200 5.500 14 5.500 12c0-1.200.4-2.200 1.100-3-.1-.6-.3-1.600.1-2.700 1 0 2 .6 2.700 1a9 9 0 0 1 5.200 0c.7-.4 1.700-1 2.700-1 .4 1.100.2 2.100.1 2.700.7.800 1.100 1.800 1.100 3 0 2.500-1.500 4.200-4.100 4.800.5.500.6 1.200.6 2v1.600c0 .4.300.700.8.6A9.500 9.500 0 0 0 12 2.500z" fill="#fff" /></T></TaskItem>
          <TaskItem><T><path d="M12 1c3 2 4 4 4 5l2-2c4 4 6 9 4 13s-6 6.500-10 6.500S2 21 1 16s1-8 3-11c0 2 1 3 1 3 1-3 4-5 7-7z" fill="#ff7a1e" /><path d="M17 4c4 4 6 9 4 13s-6 6-9 6c5-3 7-10 5-19z" fill="#ffc72c" /><path d="M3 17c1 4 5 6.500 9 6.500 3 0 6-1.500 8-4-6 2-11 1-17-2.500z" fill="#ee2f5b" /><circle cx="12" cy="14" r="5" fill="#7a4ce0" /><path d="M6 10c3-2 5-1 6 1l-3 2c-2 1-3-1-3-3z" fill="#ff9a25" /></T></TaskItem>
          <TaskItem $run><T><circle cx="12" cy="12" r="11" stroke="#f0415a" strokeWidth={1.800} /><ellipse cx="12" cy="12" rx="5.500" ry="9.500" stroke="#f0415a" strokeWidth={1.800} /></T></TaskItem>
          <TaskItem $run><T><Chrome /><circle cx="19" cy="2" r="7" fill="#3a3432" /><path d="M15 4c1-5 3-6 6-4l1 6c-3 2-6 2-7-2z" fill="#c98566" /><path d="M20 4c3 0 5 1 5 1-1 3-3 4-6 3.500z" fill="#63b4c9" /></T></TaskItem>
          <TaskItem $run><T><circle cx="11" cy="12" r="11.500" fill="#5865f2" /><path d="M5 8c4-2 8-2 12 0 1.500 3 2 5 2 8-1 1-2.500 1.700-4 2l-1-1.700c-2 .4-4 .4-6 0L7 18c-1.500-.3-3-1-4-2 0-3 .5-5 2-8z" fill="#fff" /><circle cx="8" cy="12.500" r="1.700" fill="#5865f2" /><circle cx="14" cy="12.500" r="1.700" fill="#5865f2" /><circle cx="21" cy="3" r="6" fill="#ee5a5a" /><circle cx="21" cy="3" r="2.300" fill="#fff" /></T></TaskItem>
          <TaskItem $run $w={43.6}><T><rect width="24" height="24" rx="1" fill="#0b6fcb" /><circle cx="12" cy="14" r="6" stroke="#fff" strokeWidth={3.500} /><path d="m12 14 4-6" stroke="#fff" strokeWidth={2} /><path d="M3 10C5 2 19 2 21 10" stroke="#fff" strokeWidth={1.500} strokeDasharray=".5 3.500" /></T></TaskItem>
          <TaskItem $run $w={43.6}><T><Chrome /><circle cx="20" cy="2" r="7" fill="#b9b9b9" /><path d="M18-2c3-2 5 0 5 3s-1 5-3 5-3-5-2-8z" fill="#555" /></T></TaskItem>
          <TaskItem $run $w={43.6}><T><rect x="5" y="1" width="19" height="22" rx="1.500" fill="#41a5ee" /><path d="M5 7h19v6H5z" fill="#2b7cd3" /><path d="M5 12h19v11H5z" fill="#185abd" /><rect x="0" y="6" width="13" height="13" rx="1.200" fill="#103f91" /><path d="m3 9.500 1.500 6L6.500 10l2 5.500 1.500-6" stroke="#fff" strokeWidth={1.300} /></T></TaskItem>
          <TaskItem $run><T><rect x="1" width="22" height="24" rx="3" fill="#b30b00" /><path d="M5.500 17.500c2-.5 6-7 6-11 0-1.500 1.500-1.500 1.300 0C12.500 11 16 15 19 15c1-.8-.5-2-3-1.800-4 .2-8 1.500-10 3.300-.7.500-.8 1-.5 1z" stroke="#fff" strokeWidth={1.300} /></T></TaskItem>
          <TaskItem $run $w={52}><T><circle cx="12" cy="12" r="11.500" fill="#1a9fd9" /><path d="M1 9C3 1 12-1 18 2s6 8 5 11c-1 2-4 3-8 2 1-5-2-8-6-8-3 0-6 1-8 2z" fill="#52c96a" /><path d="M1 9c6-5 14-2 14 4 0 2-1 2-1 3 2 3 6 3 8 2-3 5-9 6.500-14 4S0 14 1 9z" fill="#1b73cf" /><circle cx="4" cy="19" r="5.500" fill="#c9c9c9" /><circle cx="4" cy="17" r="2" fill="#777" /><path d="M0 22.500c1-3 7-3 8 0-2 2.500-6 2.500-8 0z" fill="#777" /></T></TaskItem>
          <TaskItem $w={38}><Icon size={16}><g fill="#222" stroke="none"><circle cx="2" cy="8" r="1.500" /><circle cx="8" cy="8" r="1.500" /><circle cx="14" cy="8" r="1.500" /></g></Icon></TaskItem>
          <Push />
          <Tray>
            <Slot $w={16}><Icon size={15} sw={1.500}><path d="m3 10.500 5-5 5 5" /></Icon></Slot>
            <Slot $w={16} $ml={16}><Icon size={17} color="#2257a8" sw={1.300}><rect x="5.500" y=".7" width="5" height="9" rx="2.500" /><path d="M3 7.500c0 6 10 6 10 0M8 12v3.300" /></Icon></Slot>
            <Slot $w={17} $ml={16}><Icon size={17} sw={1.300}><path d="M.8 6.500c4-4.500 10.400-4.500 14.400 0M3 9c3-3 7-3 10 0M5.200 11.300c1.700-1.500 3.900-1.500 5.600 0" /><circle cx="8" cy="13.300" r="1" fill="#222" /></Icon></Slot>
            <Slot $w={17} $ml={7}><Icon size={17} sw={1.200}><path d="M.8 6h2.500L7 3v10l-3.700-3H.8zM9 6c1 1 1 3 0 4M11.300 4.500c2 2 2 5 0 7M13.500 3c2.500 3 2.500 7 0 10" /></Icon></Slot>
            <Slot $w={17} $ml={7}><Icon size={17} sw={1.200}><path d="M6 4.500h7c.7 0 1 .3 1 1v6c0 .7-.3 1-1 1H2c-.7 0-1-.3-1-1V9M15.300 7v3" /><path d="M7 6.500h5.500v4.500H4z" fill="#222" /><path d="M4.500 2 1 7h2.500L3 11l4-5.500H4.500z" fill="#222" stroke="none" /></Icon></Slot>
            <Slot $w={66} $ml={5}><Clock>10:48 AM<br />5/12/2024</Clock></Slot>
            <Slot $w={18} $ml={7}><Icon size={16}><path d="M1 12.500 2.500 11V6C2.500 2.500 5 1 8 1h2v3h4v7l1 1.500z" fill="#222" /><path d="M6 14.500h4" strokeWidth={2} /><path d="M7 5h3.500L7 9h3.500" stroke="#f3e6c8" /><path d="M12 0h3l-3 3.500h3" /></Icon></Slot>
            <Slot $w={26} $ml={14}>
              <Svg width={24} height={24} viewBox="0 0 24 24"><path d="M7 1h7c2 0 3 2 3 4l-3 1-3 8-2 4H3c-3 0-3-3-2-5L4 4c.5-2 1-3 3-3z" fill="#209ddf" /><path d="m2 8-1 5c-1 3 0 5 2 5h6l3-8z" fill="#62cf5c" /><path d="M11 1h4c2 0 2.500 2 3 5h-4z" fill="#1b54c9" /><path d="M14 6h6c3 0 4 2 3 5l-3 8h-9z" fill="#c25bd9" /><path d="M12 12h10l-2 6h-9z" fill="#f2718a" /><rect x="5" y="16" width="18" height="7" rx="1.500" fill="#ffbe0b" /><text x="14" y="22" textAnchor="middle" fontSize="6.500" fontWeight="800" fill="#222" fontFamily="Open Sans">PRE</text></Svg>
            </Slot>
            <Slot $w={14} />
          </Tray>
        </Taskbar>
      </SharedScreen>

      <Ink width="1366" height="768" viewBox="0 0 1366 768">
        <g stroke="#b377ff">{violetInk.map((p, i) => <polyline key={i} points={p} />)}</g>
        <g stroke="#000">{blackInk.map((p, i) => <polyline key={i} points={p} />)}</g>
      </Ink>

      <ShareBanner>
        <Sharing>
          <Svg width={10} height={10} viewBox="0 0 10 10"><path d="M4.500 0 9 3.500H6.300c0 3 .7 4.500 3.700 6C5 10.500 2.800 8 2.800 3.500H0z" fill="#0e5a25" /></Svg>
          <SharingText>You are screen sharing</SharingText>
          <Svg width={11} height={12} viewBox="0 0 11 12"><path d="M5.500 0 11 1.800V6c0 3-2.500 5-5.500 6C2.500 11 0 9 0 6V1.800z" fill="#0e5a25" /><path d="m3 6 2 2 3.300-3.600" stroke="#25d85b" strokeWidth={1.500} /></Svg>
        </Sharing>
        <StopShare><StopSquare />Stop share</StopShare>
      </ShareBanner>

      <Tools>
        <ToolSlot><Icon size={16} color="#e8e8e8"><path d="M3.500 1 15 10.500l-6 .7L4 15z" /></Icon></ToolSlot>
        <ToolSlot><Icon size={16} color="#fff" sw={1.800}><path d="M8 2v12M2 8h12" /><path d="M8 .5 10 3H6zM8 15.500 6 13h4zM.5 8 3 6v4zM15.500 8 13 10V6z" fill="#fff" strokeWidth={.8} /></Icon></ToolSlot>
        <ToolSlot><Icon size={15} color="#cfcfcf" sw={1.500}><path d="M2 4V1.500h12V4M8 1.500v13M5.500 14.500h5" /></Icon></ToolSlot>
        <ToolSlot $bg="#0e72ed"><Icon size={17} color="#fff"><path d="m1.500 14.500.8-4L11 1.800c.7-.7 1.500-.7 2.200 0l1 1c.7.7.7 1.500 0 2.200l-8.700 8.700zM9.500 3.500l3 3M3.500 10l2.500 2.500" /></Icon></ToolSlot>
        <ToolSlot><Icon size={17} color="#fff" sw={2.200}><path d="m1 8 5 5.500L15 3" /></Icon></ToolSlot>
        <ToolSlot><Icon size={16} color="#f0f0f0" sw={1.100}><circle cx="8" cy="8" r="3" fill="#fff" /><circle cx="8" cy="8" r="5" /><path d="M3 2.300a7.600 7.600 0 0 0-1.500 9.700M13 2.300a7.600 7.600 0 0 1 1.500 9.700M5.500 15.200c1.600.7 3.400.7 5 0M5.500.8c1.600-.7 3.400-.7 5 0" /></Icon></ToolSlot>
        <ToolSlot><Icon size={16} color="#f0f0f0" sw={1.300}>{eraser}</Icon></ToolSlot>
        <ToolSlot><Svg width={16} height={16} viewBox="0 0 16 16"><circle cx="8.500" cy="8.500" r="8" fill="#b377ff" /></Svg></ToolSlot>
        <ToolSlot><Icon size={15} color="#eee" sw={1.500}><path d="M5.500 1.500 2.500 4.500l3 3M2.500 4.500H10c6 0 6 9.500 0 9.500H4" /></Icon></ToolSlot>
        <ToolSlot><Icon size={15} color="#aaa" sw={1.500}><path d="m10.500 1.500 3 3-3 3M13.500 4.500H6c-6 0-6 9.500 0 9.500h6" /></Icon></ToolSlot>
        <ToolSlot><Icon size={17} color="#e8e8e8" sw={1.300}><path d="M.8 3.500h14.400M5 3.300C5 1.500 6 .8 8 .8s3 .7 3 2.500M2.200 3.700l1 9.800c.1 1 .7 1.700 1.800 1.700h6c1.100 0 1.700-.7 1.800-1.700l1-9.800M6.300 6.500v5.700M9.700 6.500v5.700" /></Icon></ToolSlot>
        <ToolSlot><Icon size={16} color="#fff" sw={1.500}><path d="M8 .5v10M3.500 6.500 8 11l4.500-4.500M.8 15h14.400" /></Icon></ToolSlot>
        <ToolRule />
        <ToolSlot><Icon size={20}><g fill="#fff" stroke="none"><circle cx="2" cy="8" r="2" /><circle cx="8" cy="8" r="2" /><circle cx="14" cy="8" r="2" /></g></Icon></ToolSlot>
        <ToolSlot><Icon size={16} color="#e8e8e8"><circle cx="8" cy="4.500" r="2.700" /><path d="M8 9.500c-3 0-4.500 1.500-4.500 4.500H8" /><path d="M12.500 8 16 9v3c0 2-1.500 3.500-3.500 4C10.500 15.500 9 14 9 12V9z" fill="#4a93f5" stroke="none" /></Icon></ToolSlot>
        <ToolSlot $bg="#e02828" $s={24}><Icon size={12} color="#fff" sw={1.800}><path d="m1.500 1.500 13 13m0-13-13 13" /></Icon></ToolSlot>
      </Tools>
    </Root>
  );
}
